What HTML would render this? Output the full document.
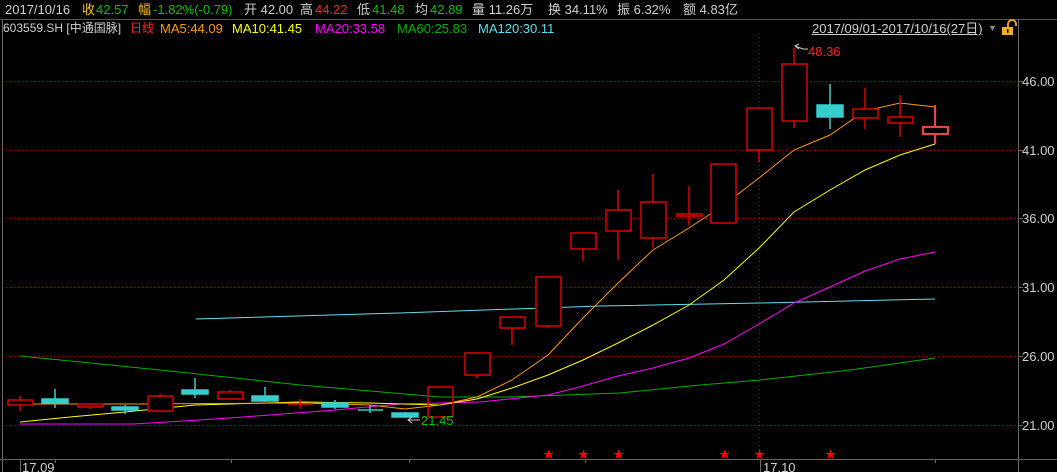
<!DOCTYPE html>
<html><head><meta charset="utf-8"><style>
body{margin:0;background:#000;width:1057px;height:472px;overflow:hidden;position:relative;font-family:"Liberation Sans","Noto Sans CJK SC",sans-serif;font-size:13px;}
.t{position:absolute;white-space:nowrap;line-height:15px;}
.w{color:#d0d0d0}.g{color:#00c400}.r{color:#ff2020}.y{color:#ffc020}
</style></head><body>
<div class="t w" style="left:5px;top:2px">2017/10/16</div>
<div class="t y" style="left:82px;top:2px">收</div><div class="t g" style="left:96px;top:2px">42.57</div>
<div class="t y" style="left:138px;top:2px">幅</div><div class="t g" style="left:153px;top:2px">-1.82%(-0.79)</div>
<div class="t w" style="left:244px;top:2px">开 42.00</div>
<div class="t w" style="left:300px;top:2px">高</div><div class="t r" style="left:315px;top:2px">44.22</div>
<div class="t w" style="left:357px;top:2px">低</div><div class="t g" style="left:372px;top:2px">41.48</div>
<div class="t w" style="left:415px;top:2px">均</div><div class="t g" style="left:430px;top:2px">42.89</div>
<div class="t w" style="left:472px;top:2px">量 11.26万</div>
<div class="t w" style="left:548px;top:2px">换 34.11%</div>
<div class="t w" style="left:617px;top:2px">振 6.32%</div>
<div class="t w" style="left:683px;top:2px">额 4.83亿</div>
<div style="position:absolute;left:0;top:19px;width:1057px;height:1px;background:#555"></div>
<div class="t w" style="left:3px;top:21px;font-size:12px">603559.SH [中通国脉]</div>
<div class="t r" style="left:130px;top:21px;font-size:12px">日线</div>
<div class="t" style="left:160px;top:21px;color:#ff9a00">MA5:44.09</div>
<div class="t" style="left:232px;top:21px;color:#ffff00">MA10:41.45</div>
<div class="t" style="left:315px;top:21px;color:#ff00ff">MA20:33.58</div>
<div class="t" style="left:397px;top:21px;color:#00b000">MA60:25.83</div>
<div class="t" style="left:478px;top:21px;color:#5ee0f0">MA120:30.11</div>
<div class="t w" style="left:812px;top:21px;text-decoration:underline">2017/09/01-2017/10/16(27日)</div>
<div class="t" style="left:988px;top:21px;color:#888;font-size:9px">▼</div>
<svg width="1057" height="472" style="position:absolute;left:0;top:0">
<g stroke="#b00000" stroke-dasharray="1,3" stroke-width="1">
<line x1="2" y1="81.5" x2="1018" y2="81.5"/><line x1="2" y1="150.5" x2="1018" y2="150.5"/>
<line x1="2" y1="218.5" x2="1018" y2="218.5"/><line x1="2" y1="287.5" x2="1018" y2="287.5"/>
<line x1="2" y1="356.5" x2="1018" y2="356.5"/><line x1="2" y1="425.5" x2="1018" y2="425.5"/>
<line x1="759.5" y1="33" x2="759.5" y2="459"/></g>
<g stroke="#666"><line x1="2.5" y1="20" x2="2.5" y2="472"/><line x1="1018.5" y1="20" x2="1018.5" y2="472"/><line x1="0" y1="459.5" x2="1057" y2="459.5"/>
<line x1="1018" y1="81.5" x2="1023" y2="81.5"/><line x1="1018" y1="150.5" x2="1023" y2="150.5"/><line x1="1018" y1="218.5" x2="1023" y2="218.5"/><line x1="1018" y1="287.5" x2="1023" y2="287.5"/><line x1="1018" y1="356.5" x2="1023" y2="356.5"/><line x1="1018" y1="425.5" x2="1023" y2="425.5"/>
<line x1="55.5" y1="459" x2="55.5" y2="463"/><line x1="231.5" y1="459" x2="231.5" y2="463"/><line x1="409.5" y1="459" x2="409.5" y2="463"/><line x1="585.5" y1="459" x2="585.5" y2="463"/><line x1="760.5" y1="459" x2="760.5" y2="472"/><line x1="935.5" y1="459" x2="935.5" y2="463"/><line x1="20.5" y1="459" x2="20.5" y2="472"/></g>
<g font-size="13" fill="#d0d0d0" font-family="Liberation Sans,sans-serif">
<text x="1022" y="86">46.00</text><text x="1022" y="155">41.00</text><text x="1022" y="223">36.00</text><text x="1022" y="292">31.00</text><text x="1022" y="361">26.00</text><text x="1022" y="430">21.00</text>
<text x="22" y="472">17.09</text><text x="763" y="472">17.10</text></g>
<polyline fill="none" stroke="#00b000" points="20,356 160,370 300,385 440,397 510,397 620,393 700,385 760,380 850,370 935,358"/>
<polyline fill="none" stroke="#5ee0f0" points="196,319 400,313 600,306 760,303 935,299"/>
<polyline fill="none" stroke="#ff00ff" points="20,424 133,424 200,420 270,415 335,410 400,404 480,402 548,395 583,386 618,376 653,368 689,358 724,344 759,324 794,303 830,287 865,271 900,259 935,252"/>
<polyline fill="none" stroke="#ffff00" points="20,422 70,417 125,412 195,405 300,402 370,403 440,405 477,399 512,388 548,375 583,360 618,343 653,325 689,305 724,280 759,248 794,212 830,190 865,170 900,155 935,144"/>
<polyline fill="none" stroke="#ff9a00" points="20,404 140,404 300,403 370,405 405,409 440,405 477,397 512,380 548,355 583,318 618,283 653,250 689,228 724,205 759,178 794,150 830,135 865,111 900,103 935,107"/>
<g stroke="#e00000" fill="none" stroke-width="1.5">
<line x1="20" y1="396" x2="20" y2="411"/><rect x="8" y="400" width="25" height="5" fill="#000"/>
<line x1="90" y1="403" x2="90" y2="409"/><rect x="78" y="404" width="25" height="3" fill="#000"/>
<line x1="160" y1="394" x2="160" y2="412"/><rect x="148" y="396" width="25" height="15" fill="#000"/>
<line x1="230" y1="390" x2="230" y2="400"/><rect x="218" y="392" width="25" height="7" fill="#000"/>
<line x1="300" y1="399" x2="300" y2="409"/><line x1="288" y1="404" x2="313" y2="404"/>
<rect x="428" y="387" width="25" height="30"/>
<line x1="477" y1="375" x2="477" y2="378"/><rect x="465" y="353" width="25" height="22" fill="#000"/>
<line x1="512" y1="328" x2="512" y2="345"/><rect x="500" y="317" width="25" height="11" fill="#000"/>
<line x1="548" y1="326" x2="548" y2="328"/><rect x="536" y="277" width="25" height="49" fill="#000"/>
<line x1="583" y1="249" x2="583" y2="261"/><rect x="571" y="233" width="25" height="16" fill="#000"/>
<line x1="618" y1="190" x2="618" y2="260"/><rect x="606" y="210" width="25" height="21" fill="#000"/>
<line x1="653" y1="174" x2="653" y2="248"/><rect x="641" y="202" width="25" height="36" fill="#000"/>
<line x1="689" y1="186" x2="689" y2="225"/><rect x="677" y="214" width="25" height="2" fill="#000"/>
<rect x="711" y="164" width="25" height="59" fill="#000"/>
<line x1="759" y1="150" x2="759" y2="162"/><rect x="747" y="108" width="25" height="42" fill="#000"/>
<line x1="794" y1="48" x2="794" y2="128"/><rect x="782" y="64" width="25" height="57" fill="#000"/>
<line x1="865" y1="88" x2="865" y2="129"/><rect x="853" y="109" width="25" height="9" fill="#000"/>
<line x1="900" y1="95" x2="900" y2="137"/><rect x="888" y="117" width="25" height="6" fill="#000"/>
</g>
<g stroke="#e04848" stroke-width="2.2"><line x1="935" y1="105" x2="935" y2="144"/><rect x="923" y="127" width="25" height="7" fill="#000"/></g>
<g stroke="#38cccc" fill="#38cccc" stroke-width="1.5">
<line x1="55" y1="389" x2="55" y2="408"/><rect x="42" y="399" width="26" height="4"/>
<line x1="125" y1="405" x2="125" y2="414"/><rect x="112" y="407" width="26" height="3"/>
<line x1="195" y1="378" x2="195" y2="398"/><rect x="182" y="390" width="26" height="4"/>
<line x1="265" y1="387" x2="265" y2="402"/><rect x="252" y="396" width="26" height="5"/>
<line x1="335" y1="400" x2="335" y2="409"/><rect x="322" y="403" width="26" height="4"/>
<line x1="370" y1="405" x2="370" y2="413"/><line x1="358" y1="410" x2="383" y2="410"/>
<line x1="405" y1="412" x2="405" y2="418"/><rect x="392" y="413" width="26" height="4"/>
<line x1="830" y1="84" x2="830" y2="129"/><rect x="817" y="105" width="26" height="12"/>
</g>
<g stroke="#ccc" fill="none"><path d="M408,420 H420 M412,417 L408,420 L412,423"/><path d="M795,46 L803,49 H808 M799,44 L795,46 L799,49"/></g>
<text x="421" y="425" font-size="13" fill="#00c400" font-family="Liberation Sans,sans-serif">21.45</text>
<text x="808" y="56" font-size="13" fill="#ff2020" font-family="Liberation Sans,sans-serif">48.36</text>
<g fill="#ff0000" font-size="11"><text x="543" y="458">★</text><text x="578" y="458">★</text><text x="613" y="458">★</text><text x="719" y="458">★</text><text x="754" y="458">★</text><text x="825" y="458">★</text></g>
<g><path d="M1008,27 v-3 a4,4 0 0 1 8,0 v2" fill="none" stroke="#f5b020" stroke-width="1.8"/><rect x="1002" y="27" width="11" height="8" fill="#f5b020"/><rect x="1007" y="29" width="1.5" height="4" fill="#000"/></g>
</svg>
</body></html>
